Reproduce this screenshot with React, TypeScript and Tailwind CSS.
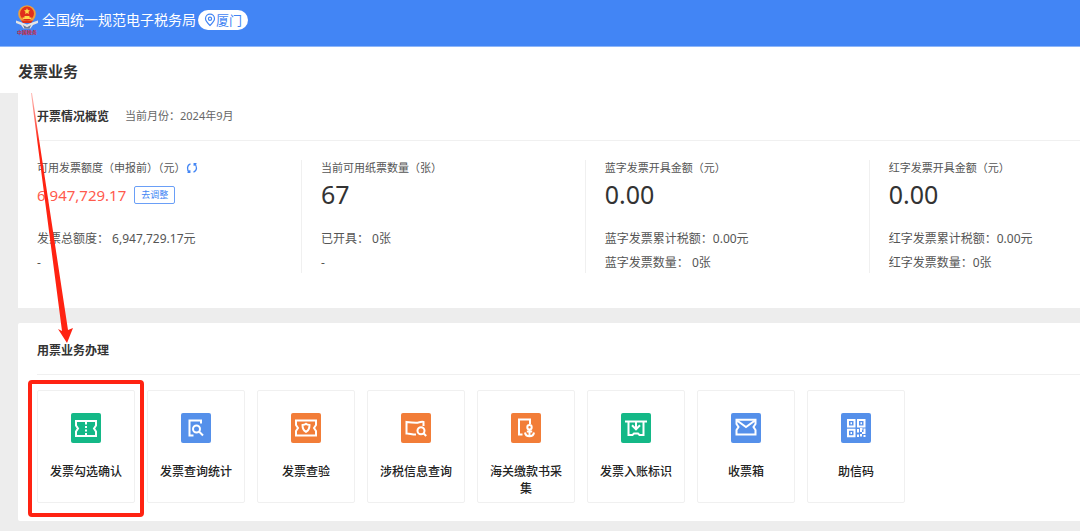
import type { ReactNode } from "react";

interface Stat {
  label: string;
  value: string;
  lines: string[];
  highlight?: boolean;
}

interface Service {
  name: string;
  color: string;
  icon: ReactNode;
  marked?: boolean;
}

const GREEN = "bg-[#14b887]";
const BLUE = "bg-[#5590ea]";
const ORANGE = "bg-[#f27d38]";

const stats: Stat[] = [
  {
    label: "可用发票额度（申报前）（元）",
    value: "6,947,729.17",
    lines: ["发票总额度： 6,947,729.17元", "-"],
    highlight: true,
  },
  {
    label: "当前可用纸票数量（张）",
    value: "67",
    lines: ["已开具： 0张", "-"],
  },
  {
    label: "蓝字发票开具金额（元）",
    value: "0.00",
    lines: ["蓝字发票累计税额：0.00元", "蓝字发票数量： 0张"],
  },
  {
    label: "红字发票开具金额（元）",
    value: "0.00",
    lines: ["红字发票累计税额：0.00元", "红字发票数量：0张"],
  },
];

// All service icons share a 30x30 box
const services: Service[] = [
  {
    name: "发票勾选确认",
    color: GREEN,
    marked: true,
    icon: (
      <>
        <path d="M5 8h20v4.500l-2 3 2 3V23H5v-4.500l2-3-2-3z" />
        <path d="M15 8v3.500M15 13v2M15 16.500v2M15 20v3" />
      </>
    ),
  },
  {
    name: "发票查询统计",
    color: BLUE,
    icon: (
      <>
        <path d="M20 10.500V7.500H8.500V22.500H12.500" />
        <circle cx="15.500" cy="16" r="3.500" />
        <path d="M18 18.500l4 4" />
      </>
    ),
  },
  {
    name: "发票查验",
    color: ORANGE,
    icon: (
      <>
        <path d="M5 7.500h20v4.500l-2 3 2 3v4.500H5V18l2-3-2-3z" />
        <path d="M15 10.800c1.200.8 2.200 1 3.500 1.200 0 3.500-.6 5.300-3.500 6.800-2.900-1.500-3.500-3.300-3.500-6.800 1.300-.2 2.300-.4 3.500-1.200z" />
      </>
    ),
  },
  {
    name: "涉税信息查询",
    color: ORANGE,
    icon: (
      <>
        <path d="M22.500 13V9c-2.500-.8-4.500.8-7.500.8S9 9.500 5.500 9v11.500c3-.2 5 1 9.500 1" />
        <circle cx="20" cy="17.800" r="3.500" />
        <path d="M22.500 20.300l2.700 2.700" />
      </>
    ),
  },
  {
    name: "海关缴款书采集",
    color: ORANGE,
    icon: (
      <>
        <path d="M19 11V6.500H8V21.500H11.500" />
        <circle cx="18.500" cy="14.200" r="2.200" />
        <path d="M18.500 16.200V23M15.800 18.500h5.400M14 19.500c.4 2.600 2.200 3.700 4.500 3.700s4.100-1.100 4.500-3.700" />
      </>
    ),
  },
  {
    name: "发票入账标识",
    color: GREEN,
    icon: (
      <>
        <path d="M4 8.500h22M7.500 8.500V22h4l1.500-1.500h4l1.500 1.500h4V8.500" />
        <path d="M15 9v7M11 12.300l4 4 4-4" />
      </>
    ),
  },
  {
    name: "收票箱",
    color: BLUE,
    icon: (
      <>
        <path d="M5.500 6.800h19V11l-2 3 2 3v4.500h-19V17l2-3-2-3z" />
        <path d="M6 7.500l9 6.500 9-6.500" />
      </>
    ),
  },
  {
    name: "助信码",
    color: BLUE,
    icon: (
      <>
        <path d="M7 7h6.500v6.500H7zM17 7h6.500v6.500H17zM7 16.800h6.500v6.500H7z" />
        <path d="M9.500 10.200h1.500M19.500 10.200h1.500M9.500 20h1.500M17 16v3.500M17 21.500V24M20 19v-3h1.500M20 21v2.500M23.500 15.500v4.500h-2.500M23.500 22v2" />
      </>
    ),
  },
];

function Emblem() {
  return (
    <svg viewBox="0 0 22 31" className="h-[31px] w-[22px]" role="img" aria-label="中国税务">
      <path
        d="M0 15.500l6 2 5 2 5-2 6-2v2.500l-5 2-2.500 3.500h-7L5 20 0 18z"
        fill="#e4e4e4"
      />
      <path d="M7 20l4 2.200 4-2.200-1.500 3.500h-5z" fill="#6b7a94" />
      <circle cx="11" cy="9" r="8.800" fill="#f0a03a" />
      <circle cx="11" cy="8.600" r="7" fill="#e0301c" />
      <path
        d="M11 3.200l.9 1.900 2.100.3-1.500 1.400.4 2.100-1.900-1-1.900 1 .4-2.100L8 5.400l2.100-.3z"
        fill="#ffd84a"
      />
      <path d="M6.500 12.500h2V11h5v1.500h2V14h-9z" fill="#ffd84a" />
      <path d="M5 15.500h12l-2 2.500H7z" fill="#e0301c" />
      <text x="11" y="29" fontSize="5" fontWeight="700" textAnchor="middle" fill="#c3283c">
        中国税务
      </text>
    </svg>
  );
}

function PinIcon() {
  return (
    <svg
      viewBox="0 0 12 14"
      className="h-3.5 w-3"
      fill="none"
      stroke="currentColor"
      strokeWidth="1.2"
      aria-hidden="true"
    >
      <path d="M6 12.500C3.500 10 1.500 8 1.500 5.700a4.500 4.500 0 0 1 9 0C10.500 8 8.500 10 6 12.500z" />
      <circle cx="6" cy="5.700" r="1.600" />
    </svg>
  );
}

function RefreshIcon() {
  return (
    <svg
      viewBox="0 0 12 12"
      className="size-3"
      fill="none"
      stroke="currentColor"
      strokeWidth="1.300"
      aria-hidden="true"
    >
      <path d="M4.500 1.800C.8 3 .6 8.200 3.500 10.300M1.500 10.300h2.300V8.200" />
      <path d="M7.500 10.200c3.700-1.200 3.900-6.400 1-8.500M10.500 1.700H8.200v2.100" />
    </svg>
  );
}

function StatCell({ stat }: { stat: Stat }) {
  return (
    <div className="border-r border-[#f0f0f0] pl-[19px] whitespace-nowrap last:border-r-0">
      <div className="flex h-4 items-center text-[11px] text-[#555]">
        {stat.label}
        {stat.highlight && (
          <button type="button" aria-label="刷新" className="text-[#4285f4]">
            <RefreshIcon />
          </button>
        )}
      </div>
      <div className="flex h-[38px] items-center gap-2">
        <span
          className={stat.highlight ? "text-[15px] text-[#ff5a4d]" : "text-[25px] text-[#333]"}
        >
          {stat.value}
        </span>
        {stat.highlight && (
          <button
            type="button"
            className="h-[18px] rounded-xs border border-[#6a9ff7] px-1.5 text-[9px] leading-4 text-[#4285f4]"
          >
            去调整
          </button>
        )}
      </div>
      <div className="mt-[15px] flex flex-col gap-1 text-xs leading-5 text-[#555]">
        {stat.lines.map((line, index) => (
          <p key={index}>{line}</p>
        ))}
      </div>
    </div>
  );
}

function ServiceTile({ service }: { service: Service }) {
  return (
    <li className="relative w-[98px]">
      <button
        type="button"
        className="flex h-[113px] w-full flex-col items-center gap-5 rounded-xs border border-[#f0f0f0] px-3 pt-[22px]"
      >
        <span className={`rounded-xs ${service.color}`}>
          <svg
            viewBox="0 0 30 30"
            className="size-[30px]"
            fill="none"
            stroke="white"
            strokeWidth="2"
            aria-hidden="true"
          >
            {service.icon}
          </svg>
        </span>
        <span className="text-xs leading-[17px] font-medium text-[#222]">{service.name}</span>
      </button>
      {service.marked && (
        <div className="pointer-events-none absolute -inset-x-[9px] -top-[10px] -bottom-[14px] rounded-sm border-4 border-[#ff2312]" />
      )}
    </li>
  );
}

function GuideArrow() {
  return (
    <svg
      viewBox="0 0 48 254"
      className="pointer-events-none absolute top-0 left-7 h-[254px] w-12"
      aria-hidden="true"
    >
      <defs>
        <linearGradient id="arrow-fade" x1="0" y1="0" x2="0" y2="1">
          <stop offset="0" stopColor="#ff2312" stopOpacity="0.3" />
          <stop offset="0.2" stopColor="#ff2312" />
        </linearGradient>
      </defs>
      <path d="M3 0l31 238-4-2 9 14 6-15-5 2L4 0z" fill="url(#arrow-fade)" />
    </svg>
  );
}

export default function App() {
  return (
    <div className="min-h-screen bg-[#ededed] font-['Noto_Sans','Noto_Sans_CJK_SC',sans-serif]">
      <header className="flex h-[47px] items-center border-b border-[#8db6f9] bg-[#4285f5] pb-1.5 pl-4 text-white">
        <Emblem />
        <span className="ml-1 text-sm whitespace-nowrap">全国统一规范电子税务局</span>
        <button
          type="button"
          className="ml-0.5 flex h-5 items-center rounded-full bg-white px-1.5 text-[13px] leading-5 whitespace-nowrap text-[#4285f4]"
        >
          <PinIcon />
          厦门
        </button>
      </header>

      <div className="flex h-[46px] items-center bg-white pt-0.5 pl-[18px]">
        <h1 className="text-[15px] font-bold text-[#333]">发票业务</h1>
      </div>

      <main className="relative flex flex-col gap-[15px] pb-2.5">
        <section className="ml-[18px] bg-white pb-[35px]">
          <div className="ml-[19px] flex h-12 items-center gap-4 border-b border-[#f0f0f0]">
            <h2 className="text-xs font-bold text-[#333]">开票情况概览</h2>
            <span className="text-[11px] text-[#666]">当前月份：2024年9月</span>
          </div>
          <div className="mt-[19px] grid grid-cols-[27fr_27fr_27fr_20fr]">
            {stats.map((stat) => (
              <StatCell key={stat.label} stat={stat} />
            ))}
          </div>
        </section>

        <section className="ml-[18px] rounded-l-xs bg-white pb-[18px] pl-[19px]">
          <div className="flex h-[52px] items-center border-b border-[#f0f0f0] pt-1">
            <h2 className="text-xs font-bold text-[#333]">用票业务办理</h2>
          </div>
          <ul className="mt-[15px] flex flex-wrap gap-3">
            {services.map((service) => (
              <ServiceTile key={service.name} service={service} />
            ))}
          </ul>
        </section>

        <GuideArrow />
      </main>
    </div>
  );
}
